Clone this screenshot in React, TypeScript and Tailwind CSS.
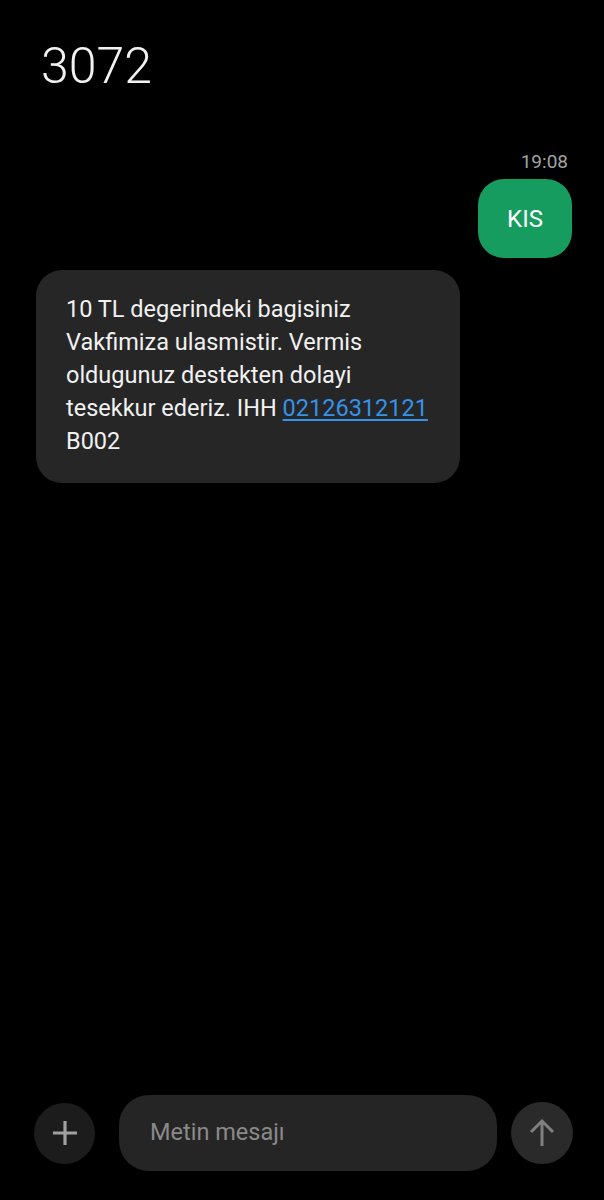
import React from "react";

export default function App() {
  const font = { fontFamily: "Roboto, 'Noto Sans', sans-serif" };
  return (
    <div className="w-[604px] h-[1200px] bg-black flex flex-col overflow-hidden" style={font}>
      <div className="pl-[41px] mt-[41px] text-[50px] leading-[50px] font-light text-[#f2f2f2]">3072</div>

      <div className="mt-[62px] pr-[36px] text-right text-[19px] leading-[18px] text-[#a3a3a3]">19:08</div>

      <div className="mt-[8px] pr-[32px] flex justify-end">
        <div className="w-[94px] h-[79px] rounded-[26px] bg-[#169c5f] flex items-center justify-center text-[24px] text-white">
          KIS
        </div>
      </div>

      <div className="mt-[12px] pl-[36px]">
        <div className="w-[424px] rounded-[26px] bg-[#262626] pl-[30px] pt-[23px] pb-[25px] text-[23.5px] leading-[33px] text-[#f1f1f1] whitespace-nowrap">
          10 TL degerindeki bagisiniz
          <br />
          Vakfimiza ulasmistir. Vermis
          <br />
          oldugunuz destekten dolayi
          <br />
          tesekkur ederiz. IHH <span className="text-[#3592ea] underline underline-offset-[3px]">02126312121</span>
          <br />
          B002
        </div>
      </div>

      <div className="mt-auto pb-[29px] pl-[34px] flex items-center">
        <div className="w-[61px] h-[61px] rounded-full bg-[#1c1c1c] flex items-center justify-center">
          <svg width="28" height="28" viewBox="0 0 28 28">
            <path d="M14 2v24M2 14h24" stroke="#a0a0a0" strokeWidth="3.2" strokeLinecap="butt" />
          </svg>
        </div>
        <div className="ml-[24px] w-[378px] h-[76px] rounded-[30px] bg-[#252525] flex items-center pl-[31px] text-[23.5px] text-[#8a8a8a]">
          Metin mesajı
        </div>
        <div className="ml-[14px] w-[62px] h-[62px] rounded-full bg-[#2a2a2a] flex items-center justify-center">
          <svg width="30" height="30" viewBox="0 0 30 30">
            <path d="M15 28V3M4 14L15 3l11 11" stroke="#7f7f7f" strokeWidth="3" fill="none" strokeLinecap="butt" strokeLinejoin="miter" />
          </svg>
        </div>
      </div>
    </div>
  );
}
